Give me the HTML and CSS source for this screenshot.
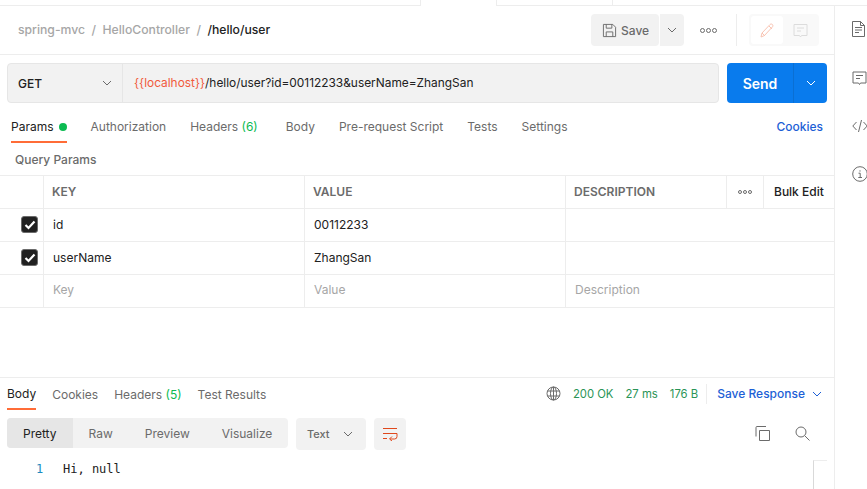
FILE: index.html
```html
<!DOCTYPE html>
<html lang="en">
<head>
<meta charset="utf-8">
<title>hello/user</title>
<link rel="stylesheet" href="styles.css">
</head>
<body>
<div class="topstrip">
  <div class="strip-a"></div>
  <div class="strip-active"></div>
  <div class="strip-b"></div>
  <div class="strip-c"></div>
</div>
<div class="app">
  <main class="main">
    <header class="head">
      <nav class="crumbs">
        <span class="crumb">spring-mvc</span><span class="sep">/</span>
        <span class="crumb">HelloController</span><span class="sep">/</span>
        <span class="crumb-cur">/hello/user</span>
      </nav>
      <div class="head-actions">
        <button class="save">
          <svg width="15" height="15" viewBox="0 0 16 16" fill="none" stroke="#6b6b6b"><path d="M1.500 1.500h10l3 3v10h-13z"/><path d="M4.500 1.500v4h6v-4M4.500 14.500v-5h7v5"/></svg>
          <span>Save</span>
        </button>
        <button class="save-more">
          <svg class="chev" width="10" height="6" viewBox="0 0 10 6" fill="none" stroke="#6b6b6b"><path d="M1 1l4 4 4-4"/></svg>
        </button>
        <button class="dots head-dots"><i></i><i></i><i></i></button>
        <div class="vsep"></div>
        <div class="mode">
          <span class="mode-on">
            <svg width="15" height="15" viewBox="0 0 15 15" fill="none" stroke="#f9c4b3"><path d="M1 14l1-4 8-8.500c.7-.6 1.700-.6 2.400 0s.6 1.700 0 2.400L4.500 12.500z"/><path d="M9 3l3 3M2 10l3 3"/></svg>
          </span>
          <span class="mode-off">
            <svg width="15" height="15" viewBox="0 0 15 15" fill="none" stroke="#dcdcdc"><path d="M1 1.500h13v11H8.500L7.500 14l-1-1.500H1z"/><path d="M4 5h7M4 8h4"/></svg>
          </span>
        </div>
      </div>
    </header>

    <section class="urlrow">
      <div class="urlbox">
        <div class="method"><span>GET</span>
          <svg class="chev" width="10" height="6" viewBox="0 0 10 6" fill="none" stroke="#6b6b6b"><path d="M1 1l4 4 4-4"/></svg>
        </div>
        <div class="url"><span class="var">{{localhost}}</span>/hello/user?id=00112233&amp;userName=ZhangSan</div>
      </div>
      <div class="send">
        <span class="send-main">Send</span>
        <span class="send-more"><svg width="10" height="6" viewBox="0 0 10 6" fill="none" stroke="#fff"><path d="M1 1l4 4 4-4"/></svg></span>
      </div>
    </section>

    <nav class="reqtabs">
      <span class="tab active">Params<b class="dot"></b></span>
      <span class="tab t-auth">Authorization</span>
      <span class="tab t-head">Headers <em>(6)</em></span>
      <span class="tab t-body">Body</span>
      <span class="tab t-pre">Pre-request Script</span>
      <span class="tab t-tests">Tests</span>
      <span class="tab t-set">Settings</span>
      <span class="cookies">Cookies</span>
    </nav>

    <div class="qp">Query Params</div>

    <div class="table">
      <div class="c hc"></div>
      <div class="c hc th">KEY</div>
      <div class="c hc th">VALUE</div>
      <div class="c hc th">DESCRIPTION</div>
      <div class="c hc dots-cell"><span class="dots"><i></i><i></i><i></i></span></div>
      <div class="c hc bulk">Bulk Edit</div>

      <div class="c chk"><span class="box"><svg width="12" height="10" viewBox="0 0 12 10" fill="none" stroke="#fff" stroke-width="2.200"><path d="M1.500 5l3 3 6-6.500"/></svg></span></div>
      <div class="c td">id</div>
      <div class="c td">00112233</div>
      <div class="c td span3"></div>

      <div class="c chk"><span class="box"><svg width="12" height="10" viewBox="0 0 12 10" fill="none" stroke="#fff" stroke-width="2.200"><path d="M1.500 5l3 3 6-6.500"/></svg></span></div>
      <div class="c td">userName</div>
      <div class="c td">ZhangSan</div>
      <div class="c td span3"></div>

      <div class="c"></div>
      <div class="c td ph">Key</div>
      <div class="c td ph">Value</div>
      <div class="c td ph span3">Description</div>
    </div>

    <section class="resp">
      <div class="resp-head">
        <nav class="resptabs">
          <span class="rtab active">Body</span>
          <span class="rtab">Cookies</span>
          <span class="rtab">Headers <em>(5)</em></span>
          <span class="rtab">Test Results</span>
        </nav>
        <div class="status">
          <svg class="globe" width="15" height="15" viewBox="0 0 15 15" fill="none" stroke="#6b6b6b"><circle cx="7.500" cy="7.500" r="6.500"/><ellipse cx="7.500" cy="7.500" rx="3" ry="6.500"/><path d="M1.500 5h12M1.500 10h12M7.500 1v13"/></svg>
          <span class="ok s1">200 OK</span>
          <span class="ok s2">27 ms</span>
          <span class="ok s3">176 B</span>
          <span class="vsep2"></span>
          <span class="saveresp">Save Response</span>
          <svg width="10" height="6" viewBox="0 0 10 6" fill="none" stroke="#1d5fd6"><path d="M1 1l4 4 4-4"/></svg>
        </div>
      </div>
      <div class="resp-tools">
        <div class="seg">
          <span class="seg-i on">Pretty</span>
          <span class="seg-i">Raw</span>
          <span class="seg-i">Preview</span>
          <span class="seg-i">Visualize</span>
        </div>
        <div class="fmt"><span>Text</span><svg width="10" height="6" viewBox="0 0 10 6" fill="none" stroke="#6b6b6b"><path d="M1 1l4 4 4-4"/></svg></div>
        <div class="wrap"><svg width="16" height="14" viewBox="0 0 16 14" fill="none" stroke="#e0481c"><path d="M1 1.500h14M1 6.500h14M1 11.500h4M15 6.500v3a2.500 2.500 0 0 1-2.500 2.500H8M10 9.500L7.500 12l2.500 2"/></svg></div>
        <div class="tools-right">
          <svg width="15" height="15" viewBox="0 0 15 15" fill="none" stroke="#6b6b6b"><path d="M4.500 4.500h10v10h-10z"/><path d="M1 10.500V1.500a1 1 0 0 1 1-1h9"/></svg>
          <svg width="15" height="15" viewBox="0 0 15 15" fill="none" stroke="#6b6b6b"><circle cx="6" cy="6" r="5"/><path d="M9.800 9.800l4.700 4.700"/></svg>
        </div>
      </div>
      <div class="code">
        <span class="ln">1</span><span class="txt">Hi, null</span>
        <div class="mini"></div>
      </div>
    </section>
  </main>

  <aside class="side">
    <svg width="13" height="16" viewBox="0 0 13 16" fill="none" stroke="#6b6b6b"><path d="M.5.500h8l4 4v11H.5z"/><path d="M8.500.500v4h4M3 6.500h7M3 9h7M3 11.500h4"/></svg>
    <svg width="15" height="15" viewBox="0 0 15 15" fill="none" stroke="#6b6b6b"><path d="M1 1h13v11H8.500l-1 1.500-1-1.500H1z"/><path d="M4 4.500h7M4 7.500h4"/></svg>
    <svg width="16" height="14" viewBox="0 0 16 14" fill="none" stroke="#6b6b6b"><path d="M4.500 3L.8 7l3.700 4M11.500 3l3.700 4-3.700 4M9.500 1L6.500 13"/></svg>
    <svg width="16" height="16" viewBox="0 0 16 16" fill="none" stroke="#6b6b6b"><circle cx="8" cy="8" r="7.300"/><path d="M6.500 7.200H8.200v4.300M6.300 11.500h3.700M8 4.300v1.300"/></svg>
  </aside>
</div>
</body>
</html>
```
FILE: styles.css
```css
* { box-sizing: border-box; }
html, body { margin: 0; padding: 0; height: 489px; overflow: hidden; background: #fff; }
body { font-family: Inter, "Noto Sans", sans-serif; font-size: 12px; color: #212121; }
button { font: inherit; border: 0; padding: 0; background: none; color: inherit; }
em { font-style: normal; color: #0cbb52; }

.topstrip { display: flex; height: 6px; }
.strip-a { width: 421px; border-right: 1px solid #ededed; border-bottom: 1px solid #ededed; }
.strip-active { width: 75px; }
.strip-b { width: 117px; border-left: 1px solid #ededed; border-right: 1px solid #ededed; border-bottom: 1px solid #ededed; }
.strip-c { flex: 1; border-bottom: 1px solid #ededed; }

.app { display: flex; height: 483px; }
.main { width: 834px; flex: none; }
.side { flex: 1; border-left: 1px solid #ededed; display: flex; flex-direction: column; align-items: flex-start; padding: 15px 0 0 17px; overflow: hidden; }
.side svg { flex: none; }
.side svg:nth-child(2) { margin-top: 34px; }
.side svg:nth-child(3) { margin-top: 33px; }
.side svg:nth-child(4) { margin-top: 33px; }

.head { height: 49px; border-bottom: 1px solid #ededed; display: flex; align-items: center; justify-content: space-between; padding-left: 18px; }
.crumbs { display: flex; font-size: 12.200px; font-weight: 500; color: #a6a6a6; padding-bottom: 1px; }
.sep { margin: 0 6.500px; }
.crumb-cur { color: #212121; }
.head-actions { display: flex; align-items: center; padding-right: 15px; height: 32px; }
.save { width: 68px; height: 32px; background: #f2f2f2; border-radius: 4px; display: flex; align-items: center; gap: 4px; padding-left: 11px; font-weight: 500; color: #6b6b6b; }
.save-more { width: 24px; height: 32px; margin-left: 1px; background: #f2f2f2; border-radius: 0 4px 4px 0; display: flex; align-items: center; justify-content: center; }
.dots { display: inline-flex; gap: 1px; align-items: center; }
.dots i { width: 4px; height: 4px; border: 1px solid #6b6b6b; border-radius: 50%; display: block; }
.head-dots { width: 48px; height: 32px; justify-content: center; }
.head-dots i { width: 5px; height: 5px; }
.vsep { width: 1px; height: 32px; background: #ededed; margin-left: 4px; margin-right: 12px; }
.mode { width: 70px; height: 32px; background: #f9f9f9; border-radius: 4px; padding: 2px; display: flex; }
.mode-on { width: 32px; height: 28px; background: #fff; border-radius: 3px; display: flex; align-items: center; justify-content: center; }
.mode-off { width: 34px; display: flex; align-items: center; justify-content: center; }

.urlrow { display: flex; gap: 8px; padding: 8px 7px 0; height: 48px; }
.urlbox { width: 712px; height: 40px; display: flex; background: #f2f2f2; border: 1px solid #e6e6e6; border-radius: 4px; }
.method { width: 115px; border-right: 1px solid #e6e6e6; display: flex; align-items: center; justify-content: space-between; padding: 0 6px 0 10px; font-weight: 500; }
.method svg { margin-right: 4px; }
.url { padding: 0 0 1px 11px; display: flex; align-items: center; font-size: 11.900px; color: #212121; white-space: pre; }
.var { color: #f15a3c; }
.send { width: 100px; height: 40px; background: #097bed; color: #fff; border-radius: 4px; display: flex; }
.send-main { width: 67px; border-right: 1px solid #0a6fd3; display: flex; align-items: center; justify-content: center; font-size: 14px; font-weight: 600; }
.send-more { flex: 1; display: flex; align-items: center; justify-content: center; }

.reqtabs { display: flex; height: 48px; padding: 8px 0 0 11px; align-items: flex-start; color: #6b6b6b; }
.tab { display: inline-flex; align-items: center; height: 32px; padding-bottom: 1px; white-space: nowrap; }
.tab.active { color: #212121; border-bottom: 2px solid #ff6c37; padding: 1px 0 0; }
.dot { width: 8px; height: 8px; border-radius: 50%; background: #0cbb52; margin-left: 5px; }
.t-auth { margin-left: 24px; }
.t-head { margin-left: 24px; white-space: pre; }
.t-body { margin-left: 28px; }
.t-pre { margin-left: 24px; }
.t-tests { margin-left: 24px; }
.t-set { margin-left: 24px; }
.cookies { margin-left: auto; margin-right: 11px; height: 32px; padding-bottom: 1px; display: flex; align-items: center; color: #1d5fd6; font-weight: 500; }

.qp { height: 24px; padding: 2px 15px 0; font-weight: 500; color: #6b6b6b; line-height: 14px; }

.table { display: grid; grid-template-columns: 44px 261px 261px 161px 37px 70px; grid-auto-rows: 33px; border-top: 1px solid #ededed; }
.c { border-right: 1px solid #ededed; border-bottom: 1px solid #ededed; display: flex; align-items: center; }
.c:nth-child(6), .span3 { border-right: 0; }
.span3 { grid-column: span 3; }
.hc { padding-bottom: 1px; }
.th { padding-left: 8px; font-weight: 600; color: #6b6b6b; }
.td { padding: 0 0 1px 9px; color: #212121; }
.ph { color: #a6a6a6; padding-bottom: 3px; }
.dots-cell { justify-content: center; }
.bulk { padding-left: 10px; font-weight: 500; color: #212121; }
.chk { padding: 0 0 1px 21px; }
.box { width: 17px; height: 17px; background: #212121; border: 1px solid #6b6b6b; border-radius: 3px; display: flex; align-items: center; justify-content: center; }

.resp { margin-top: 69px; border-top: 1px solid #ededed; }
.resp-head { height: 31px; display: flex; justify-content: space-between; align-items: flex-start; padding: 0 12px 0 7px; }
.resptabs { display: flex; gap: 16px; color: #6b6b6b; }
.rtab { height: 32px; display: flex; align-items: center; white-space: pre; }
.rtab.active { color: #212121; border-bottom: 2px solid #ff6c37; }
.status { display: flex; align-items: center; height: 31px; font-size: 11.300px; }
.ok { color: #2a9456; }
.globe { margin-right: 12px; }
.s2 { margin-left: 12px; }
.s3 { margin-left: 12px; }
.vsep2 { width: 1px; height: 20px; background: #ededed; margin: 0 10px 0 8px; }
.saveresp { color: #1d5fd6; font-weight: 500; font-size: 12px; margin-right: 7px; }

.resp-tools { display: flex; align-items: flex-start; padding: 9px 16px 0 7px; height: 41px; }
.seg { display: flex; height: 30px; width: 281px; background: #f2f2f2; border-radius: 4px; overflow: hidden; color: #6b6b6b; }
.seg-i { display: flex; align-items: center; padding: 0 16px; }
.seg-i.on { background: #e6e6e6; color: #212121; width: 66px; }
.fmt { margin-left: 8px; width: 70px; height: 32px; background: #f2f2f2; border-radius: 4px; display: flex; align-items: center; justify-content: space-between; padding: 0 13px 0 11px; font-size: 11px; font-weight: 500; color: #6b6b6b; }
.wrap { margin-left: 8px; width: 32px; height: 32px; background: #f2f2f2; border-radius: 4px; display: flex; align-items: center; justify-content: center; }
.tools-right { margin-left: auto; display: flex; gap: 25px; padding: 8px 8px 0 0; }

.code { position: relative; height: 32px; padding: 9px 0 0 36px; font-family: "DejaVu Sans Mono", "Liberation Mono", monospace; font-size: 12px; display: flex; align-items: flex-start; line-height: 20px; }
.ln { color: #1d8ac0; width: 27px; }
.mini { position: absolute; left: 813px; top: 10px; width: 14px; height: 40px; border-left: 1px solid #d9d9d9; border-top: 1px solid #ededed; }
```
